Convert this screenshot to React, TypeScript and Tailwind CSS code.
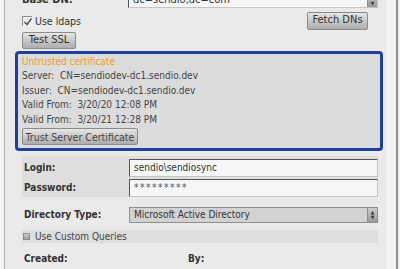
import React from 'react';

const font = { fontFamily: '"DejaVu Sans Condensed", "Liberation Sans", sans-serif' };

const Button = ({ label, className = '' }: { label: string; className?: string }) => (
  <div className={`flex items-center justify-center rounded-[2px] border border-[#8a8a8a] bg-gradient-to-b from-[#e6e6e6] to-[#adadad] text-[#333] ${className}`}>
    {label}
  </div>
);

const Input = ({ value, className = '' }: { value: string; className?: string }) => (
  <div className={`flex h-[18px] items-center border border-[#c4c4c4] border-l-[#555] border-t-[#555] bg-[#f6f6f6] pl-[4px] text-[10px] text-[#333] ${className}`}>
    {value}
  </div>
);

const Select = ({ value, className = '' }: { value: string; className?: string }) => (
  <div className={`flex items-center border border-[#8e8e8e] bg-[#d2d2d2] text-[10px] text-[#333] ${className}`}>
    <span className="flex-1 pl-[4px]">{value}</span>
    <span className="flex h-full w-[10px] flex-col items-center justify-center border-l border-[#8e8e8e] bg-gradient-to-b from-[#cfcfcf] to-[#9a9a9a] text-[5px] leading-[5px] text-[#333]">
      <span>▲</span>
      <span>▼</span>
    </span>
  </div>
);

const Checkbox = ({ checked }: { checked?: boolean }) => (
  <div className="relative h-[10px] w-[10px] border border-[#8d8d8d] bg-gradient-to-b from-[#d8d8d8] to-[#a8a8a8]">
    {checked && (
      <svg viewBox="0 0 10 10" className="absolute inset-0 h-[10px] w-[10px] bg-[#f0f0f0]">
        <path d="M1.5 5 L4 7.5 L8.5 1.5" stroke="#555" strokeWidth="1.6" fill="none" />
      </svg>
    )}
  </div>
);

export default function App() {
  return (
    <div style={font} className="flex h-[269px] w-[400px] overflow-hidden bg-[#f2f2f2]">
      <div className="w-[4px] bg-[#f5f5f5]" />
      <div className="w-[1px] bg-[#b3b3b3]" />
      <div className="flex w-[381px] flex-col bg-[#eaeaea] pl-[17px] pr-[8px]">
        {/* Base DN */}
        <div className="-mt-[8px] flex items-center">
          <span className="w-[106px] text-[11px] font-bold text-[#333]">Base DN:</span>
          <div className="flex h-[16px] flex-1 items-end border border-[#c4c4c4] border-l-[#555] border-t-[#555] bg-[#f6f6f6] text-[11px] leading-[11px] text-[#333]">
            <span className="flex-1 pb-[2px] pl-[4px]">dc=sendio,dc=com</span>
            <span className="flex h-full w-[10px] flex-col items-center justify-end border-l border-[#8e8e8e] bg-gradient-to-b from-[#cfcfcf] to-[#9a9a9a] pb-[1px] text-[5px] leading-[5px] text-[#333]">
              <span>▼</span>
            </span>
          </div>
        </div>

        <div className="mt-[3px] flex items-start justify-between">
          <div className="mt-[2px] flex items-center gap-[3px]">
            <Checkbox checked />
            <span className="text-[10.5px] text-[#333]">Use ldaps</span>
          </div>
          <Button label="Fetch DNs" className="mr-[10px] h-[18px] w-[61px] text-[11px]" />
        </div>

        <Button label="Test SSL" className="mt-[2px] h-[17px] w-[54px] text-[11px]" />

        {/* Certificate box */}
        <div className="-ml-[7px] -mr-[5px] mt-[2px] flex h-[100px] flex-col rounded-[4px] border-[3px] border-[#1f3f9a] bg-[#dcdcdc] pl-[4px] text-[10px] leading-[14.6px] text-[#444]">
          <span className="mt-[1px] text-[#f29b1d]">Untrusted certificate</span>
          <span>Server:&nbsp; CN=sendiodev-dc1.sendio.dev</span>
          <span>Issuer:&nbsp; CN=sendiodev-dc1.sendio.dev</span>
          <span>Valid From:&nbsp; 3/20/20 12:08 PM</span>
          <span>Valid From:&nbsp; 3/20/21 12:28 PM</span>
          <Button label="Trust Server Certificate" className="mt-[1px] h-[17px] w-[116px] text-[10.5px] text-[#444]" />
        </div>

        {/* Login / password */}
        <div className="mt-[5px] flex flex-col gap-[2px] bg-[#dedede] pt-[3px]">
          <div className="flex items-center">
            <span className="w-[107px] pl-[2px] text-[10px] font-bold text-[#333]">Login:</span>
            <Input value="sendio\sendiosync" className="flex-1" />
          </div>
          <div className="flex items-center">
            <span className="w-[107px] pl-[2px] text-[10px] font-bold text-[#333]">Password:</span>
            <Input value="*********" className="flex-1 text-[8px] tracking-[1.5px] text-[#555]" />
          </div>
        </div>

        <div className="mt-[10px] flex items-center">
          <span className="w-[107px] pl-[2px] text-[10px] font-bold text-[#333]">Directory Type:</span>
          <Select value="Microsoft Active Directory" className="h-[16px] flex-1" />
        </div>

        <div className="mt-[7px] flex h-[13px] items-center gap-[5px] bg-[#dedede] pl-[1px]">
          <div className="h-[7px] w-[7px] border border-[#8d8d8d] bg-gradient-to-b from-[#cfcfcf] to-[#9e9e9e]" />
          <span className="text-[10px] text-[#444]">Use Custom Queries</span>
        </div>

        <div className="mt-[8px] flex items-center text-[10px] font-bold text-[#333]">
          <span className="w-[166px] pl-[2px]">Created:</span>
          <span>By:</span>
        </div>
      </div>
      <div className="w-[10px] bg-[#f3f3f3]" />
      <div className="w-[2px] bg-[#8f8f8f]" />
      <div className="flex-1 bg-[#f3f3f3]" />
    </div>
  );
}
